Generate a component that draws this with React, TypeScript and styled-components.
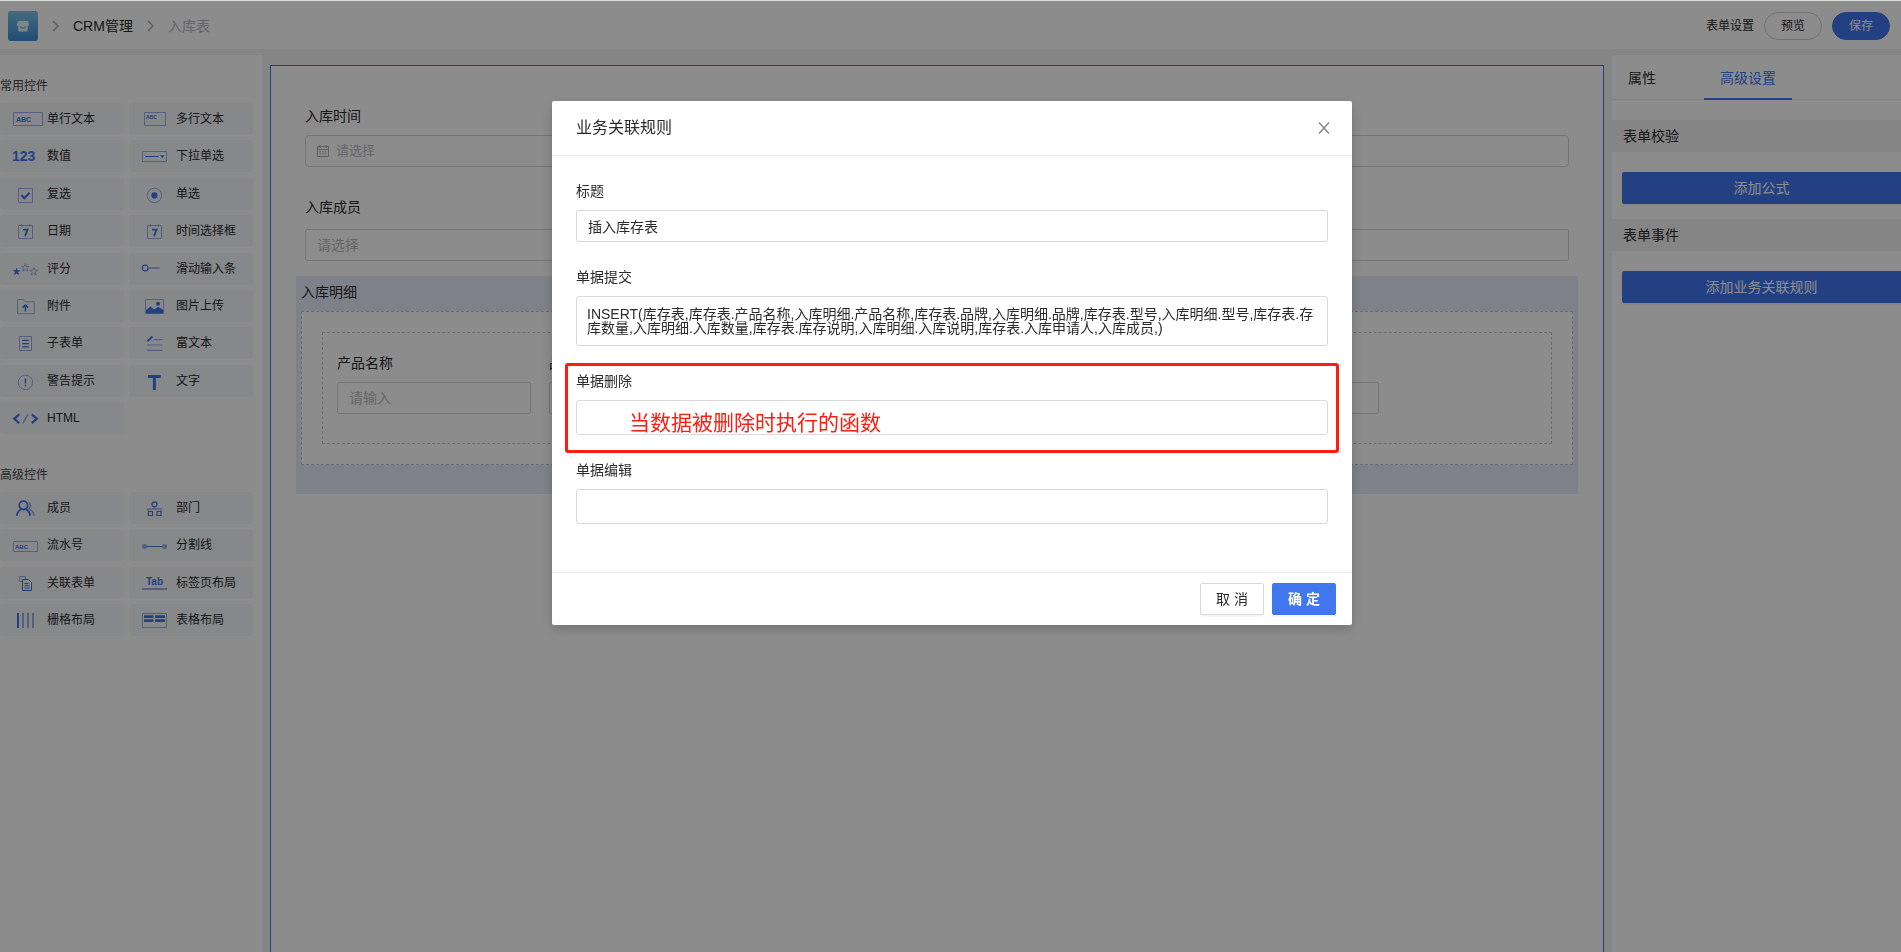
import React from "react";
import styled, { createGlobalStyle } from "styled-components";

const BLUE = "#4076ee";
const SOFT = "#96aeec";
const INK = "#2a2a2a";

const GlobalStyle = createGlobalStyle`
  * { box-sizing: border-box; }
  body {
    margin: 0;
    background: #f2f2f2;
    color: ${INK};
    font-family: "Liberation Sans", "Noto Sans CJK SC", sans-serif;
    font-size: 14px;
    line-height: 22px;
  }
  button, input, textarea { font: inherit; color: inherit; }
  button { cursor: pointer; }
`;

const Page = styled.div`
  display: flex;
  flex-direction: column;
  min-height: 100vh;
`;

const Header = styled.header`
  display: flex;
  align-items: center;
  justify-content: space-between;
  height: 49px;
  padding: 2px 11px 0 8px;
  border-top: 1px solid #d9dcdc;
  background: #fff;
`;

const Breadcrumb = styled.nav`
  display: flex;
  align-items: center;
  gap: 14px;
`;

const Logo = styled.a`
  display: block;
  width: 30px;
  height: 30px;
  border-radius: 3px;
  background: linear-gradient(#7ac6e2, #3c8bd6);
`;

const Crumb = styled.a<{ $muted?: boolean }>`
  color: ${(p) => (p.$muted ? "#b4b9c3" : INK)};
  text-decoration: none;
`;

const HeaderActions = styled.div`
  display: flex;
  align-items: center;
  gap: 10px;
  font-size: 12px;
`;

const TextLink = styled.a`
  color: ${INK};
  text-decoration: none;
`;

const PillButton = styled.button<{ $primary?: boolean }>`
  width: 58px;
  height: 28px;
  padding: 0;
  border: 1px solid ${(p) => (p.$primary ? BLUE : "#d0d0d0")};
  border-radius: 14px;
  background: ${(p) => (p.$primary ? BLUE : "#fff")};
  color: ${(p) => (p.$primary ? "#fff" : INK)};
`;

const Workspace = styled.div`
  display: flex;
  flex: 1;
  gap: 8px;
  margin-top: 6px;
`;

const Palette = styled.aside`
  width: 262px;
  flex: none;
  padding-top: 20px;
  background: #fff;
  font-size: 12px;
`;

const PaletteTitle = styled.h2`
  margin: 0 0 6px;
  font-size: 12px;
  font-weight: 400;
  color: #444;
`;

const TileGrid = styled.div<{ $height: number }>`
  display: grid;
  grid-template-columns: 124px 124px;
  grid-auto-rows: 32px;
  column-gap: 5px;
  align-content: space-between;
  height: ${(p) => p.$height}px;
  margin-bottom: 30px;
`;

const Tile = styled.button`
  display: flex;
  align-items: center;
  gap: 9px;
  padding: 0 0 0 13px;
  border: 0;
  border-radius: 4px;
  background: #f5f7fa;
  white-space: nowrap;
`;

const TileIcon = styled.svg`
  width: 25px;
  height: 32px;
  flex: none;
  overflow: visible;
  font-family: "Liberation Sans", sans-serif;
  font-weight: 700;
`;

const Canvas = styled.main`
  flex: 1;
  min-width: 0;
  margin-top: 10px;
  padding: 39px 25px 0;
  border: 1px solid ${BLUE};
  border-bottom: 0;
  background: #fff;
`;

const CanvasField = styled.div<{ $after: number }>`
  padding: 0 9px;
  margin-bottom: ${(p) => p.$after}px;
`;

const Label = styled.label<{ $gap?: number }>`
  display: block;
  margin-bottom: ${(p) => p.$gap ?? 8}px;
`;

const InputBox = styled.div<{ $radius?: number; $small?: boolean }>`
  display: flex;
  align-items: center;
  gap: 7px;
  height: 32px;
  padding: 0 11px;
  border: 1px solid #d5d5d9;
  border-radius: ${(p) => p.$radius ?? 2}px;
  background: #fff;
  font-size: ${(p) => (p.$small ? 13 : 14)}px;
`;

const BareInput = styled.input`
  flex: 1;
  min-width: 0;
  padding: 0;
  border: 0;
  outline: 0;
  background: transparent;
  &::placeholder {
    color: #b9b9bd;
    opacity: 1;
  }
`;

const SubForm = styled.section`
  padding: 5px 5px 29px;
  background: #e5ecf9;
`;

const SubFormTitle = styled.h3`
  margin: 0 0 8px;
  font-size: 14px;
  font-weight: 400;
`;

const DashedOuter = styled.div`
  padding: 20px;
  border: 1px dashed #c4c4c4;
  background: #fff;
`;

const DashedInner = styled.div`
  display: flex;
  gap: 18px;
  padding: 19px 14px 29px;
  border: 1px dashed #c4c4c4;
`;

const SubColumn = styled.div`
  width: 194px;
`;

const Inspector = styled.aside`
  width: 289px;
  flex: none;
  background: #fff;
`;

const Tabs = styled.div`
  display: flex;
  height: 45px;
  gap: 32px;
  border-bottom: 1px solid #e8e8e8;
`;

const Tab = styled.button<{ $active?: boolean }>`
  height: 45px;
  padding: 2px 16px 0;
  border: 0;
  border-bottom: 2px solid ${(p) => (p.$active ? BLUE : "transparent")};
  background: none;
  color: ${(p) => (p.$active ? BLUE : INK)};
`;

const InspectorGroup = styled.section`
  &:first-of-type {
    margin-top: 20px;
  }
  margin-bottom: 15px;
`;

const InspectorTitle = styled.h3`
  margin: 0;
  padding: 5px 11px;
  font-size: 14px;
  font-weight: 400;
  background: #f2f2f5;
`;

const WideButton = styled.button`
  display: block;
  width: calc(100% - 10px);
  height: 32px;
  margin: 20px 0 0 10px;
  padding: 0;
  border: 0;
  border-radius: 2px 0 0 2px;
  background: ${BLUE};
  box-shadow: 0 2px 0 rgba(0, 0, 0, 0.05);
  color: #fff;
`;

const Mask = styled.div`
  position: fixed;
  inset: 1px 0 0 0;
  display: flex;
  align-items: flex-start;
  justify-content: center;
  padding: 100px 0 0 3px;
  background: rgba(0, 0, 0, 0.45);
`;

const Dialog = styled.div`
  width: 800px;
  border-radius: 2px;
  background: #fff;
  box-shadow: 0 4px 12px rgba(0, 0, 0, 0.2);
`;

const DialogHead = styled.div`
  display: flex;
  align-items: center;
  justify-content: space-between;
  height: 55px;
  padding: 0 20px 0 24px;
  border-bottom: 1px solid #ebebeb;
`;

const DialogTitle = styled.h1`
  margin: 0;
  font-size: 16px;
  font-weight: 400;
`;

const CloseButton = styled.button`
  display: grid;
  place-items: center;
  width: 16px;
  height: 16px;
  padding: 0;
  border: 0;
  background: none;
`;

const DialogBody = styled.div`
  display: flex;
  flex-direction: column;
  gap: 24px;
  padding: 24px 24px 48px;
`;

const DialogField = styled.div`
  position: relative;
`;

const DialogInput = styled.input`
  display: block;
  width: 100%;
  height: 32px;
  padding: 0 11px;
  border: 1px solid #d9d9d9;
  border-radius: 2px;
  outline: 0;
`;

const CodeArea = styled.textarea<{ $height: number }>`
  display: block;
  width: 100%;
  height: ${(p) => p.$height}px;
  padding: 10px;
  border: 1px solid #d9d9d9;
  border-radius: 3px;
  outline: 0;
  overflow: hidden;
  resize: none;
  line-height: 14px;
`;

const Highlight = styled.div`
  position: absolute;
  inset: -7px -11px -18px;
  border: 3px solid #ff1c10;
  border-radius: 3px;
  pointer-events: none;
`;

const Note = styled.p`
  position: absolute;
  top: 37px;
  left: 53px;
  margin: 0;
  color: #ff1c10;
  font-size: 21px;
  line-height: 32px;
`;

const DialogFoot = styled.div`
  display: flex;
  justify-content: flex-end;
  gap: 8px;
  padding: 10px 16px;
  border-top: 1px solid #ebebeb;
`;

const DialogButton = styled.button<{ $primary?: boolean }>`
  width: 64px;
  height: 32px;
  padding: 0;
  border: 1px solid ${(p) => (p.$primary ? BLUE : "#d9d9d9")};
  border-radius: 2px;
  background: ${(p) => (p.$primary ? BLUE : "#fff")};
  box-shadow: 0 2px 0 rgba(0, 0, 0, 0.03);
  color: ${(p) => (p.$primary ? "#fff" : INK)};
  font-weight: ${(p) => (p.$primary ? 600 : 400)};
`;

const star = (cx: number, cy: number) =>
  Array.from({ length: 10 }, (_, i) => {
    const r = i % 2 ? 1.8 : 4.2;
    const a = -Math.PI / 2 + (i * Math.PI) / 5;
    return `${(cx + r * Math.cos(a)).toFixed(2)},${(cy + r * Math.sin(a)).toFixed(2)}`;
  }).join(" ");

const icons: Record<string, React.ReactNode> = {
  single: (
    <>
      <path d="M.5 9.5h29v13H.5z" stroke={SOFT} fill="none" />
      <text x="3" y="19" fontSize="7" fill={BLUE}>ABC</text>
    </>
  ),
  multi: (
    <>
      <path d="M2.5 9.5h21v13h-21z" stroke={SOFT} fill="none" />
      <text x="4" y="16" fontSize="5" fill={BLUE}>ABC</text>
    </>
  ),
  number: <text x="-1" y="21" fontSize="14" fill={BLUE}>123</text>,
  select: (
    <>
      <path d="M.5 11.5h24v10H.5z" stroke={SOFT} fill="none" />
      <path d="M3 16.5h13.5" stroke={BLUE} />
      <path d="M18 15.2h4.6l-2.3 2.8z" fill={BLUE} />
    </>
  ),
  checkbox: (
    <>
      <path d="M5.5 10.5h14v14h-14z" stroke={SOFT} fill="none" />
      <path d="M8.3 17l3 3.2 5.2-5.4" stroke={BLUE} strokeWidth="2" fill="none" />
    </>
  ),
  radio: (
    <>
      <circle cx="12.4" cy="17.4" r="7.2" stroke={SOFT} fill="none" />
      <circle cx="12.4" cy="17.4" r="3.1" fill={BLUE} />
    </>
  ),
  calendar: (
    <>
      <path d="M5.5 10.5h14v13h-14z" stroke={SOFT} fill="none" />
      <path d="M8.5 9v3M16.5 9v3" stroke={SOFT} />
      <path d="M10 14.7h4.6l-2.6 6.5" stroke={BLUE} strokeWidth="1.8" fill="none" />
    </>
  ),
  rate: (
    <>
      <polygon points={star(3.6, 18.6)} fill={BLUE} />
      <polygon points={star(12.2, 14.8)} fill="none" stroke={SOFT} strokeWidth=".9" />
      <polygon points={star(20.8, 18.6)} fill="none" stroke={SOFT} strokeWidth=".9" />
    </>
  ),
  slider: (
    <>
      <path d="M6.5 15h11.2" stroke={SOFT} strokeWidth="1.6" />
      <circle cx="3.2" cy="15" r="2.9" stroke={BLUE} strokeWidth="1.2" fill="none" />
    </>
  ),
  upload: (
    <>
      <path d="M4.5 9.5h6l1.6 2.2h9.2v12H4.5z" stroke={SOFT} fill="none" />
      <path d="M12.4 21.5v-6M9.6 17.6l2.8-2.6 2.8 2.6" stroke={BLUE} strokeWidth="1.5" fill="none" />
    </>
  ),
  image: (
    <>
      <path d="M3.5 9.5h18v14h-18z" stroke={SOFT} fill="none" />
      <path d="M4 20l4.5-3.6 3.6 3.2 4.2-2.8 5 3.2v3.4H4z" fill={BLUE} />
      <circle cx="16" cy="13.8" r="2" fill={BLUE} />
    </>
  ),
  subform: (
    <>
      <path d="M6.5 9.5h12v14h-12z" stroke={SOFT} fill="none" />
      <path d="M9.2 13.4h6.6M9.2 16.6h6.6M9.2 19.9h6.6" stroke={BLUE} strokeWidth="1.3" />
    </>
  ),
  rich: (
    <>
      <path d="M11.5 12.7h8.8M5 18h15.3M5 23.4h15.3" stroke={SOFT} strokeWidth="1.2" />
      <path d="M5.4 14.4l5-5" stroke={BLUE} strokeWidth="2" />
    </>
  ),
  alert: (
    <>
      <circle cx="12.4" cy="17.4" r="7.2" stroke={SOFT} fill="none" />
      <path d="M12.4 13.6v5M12.4 19.8v1.4" stroke={BLUE} strokeWidth="1.4" />
    </>
  ),
  text: <path d="M6 11.4h12.8M12.4 11.4V25" stroke={BLUE} strokeWidth="3" />,
  html: (
    <>
      <path d="M15 12.2L9.8 21.4" stroke={SOFT} strokeWidth="1.6" />
      <path d="M6.2 12.4l-5 4.4 5 4.4M18.8 12.4l5 4.4-5 4.4" stroke={BLUE} strokeWidth="2.2" fill="none" />
    </>
  ),
  member: (
    <>
      <path d="M15.6 10.2c2 1.2 2.6 4.6.4 6.8 2.6 1 4.6 3.6 5 6.8" stroke={SOFT} strokeWidth="1.5" fill="none" />
      <circle cx="10.4" cy="13.3" r="4.2" stroke={BLUE} strokeWidth="1.8" fill="none" />
      <path d="M3.8 23.8c.4-3.4 2.2-5.6 4.4-6.6M12.6 17.2c2.4 1 4.2 3.2 4.6 6.6" stroke={BLUE} strokeWidth="1.8" fill="none" />
    </>
  ),
  dept: (
    <>
      <path d="M6 19v-2h13v2M12.5 15v2" stroke={SOFT} strokeWidth="1.4" fill="none" />
      <circle cx="12.5" cy="12.3" r="2.5" stroke={BLUE} strokeWidth="1.3" fill="none" />
      <path d="M6.5 19.5h4v4h-4zM15 19.5h4v4h-4z" stroke={BLUE} strokeWidth="1.2" fill="none" />
    </>
  ),
  serial: (
    <>
      <path d="M.5 12.5h24v10H.5z" stroke={SOFT} fill="none" />
      <text x="2" y="20" fontSize="6" fill={BLUE}>ABC</text>
    </>
  ),
  divider: (
    <>
      <path d="M3 17.5h19" stroke={BLUE} />
      <circle cx="2.5" cy="17.5" r="2.5" fill={SOFT} />
      <circle cx="22.5" cy="17.5" r="2.5" fill={SOFT} />
    </>
  ),
  linked: (
    <>
      <path d="M9 14.5H6.5v-5h6V12" stroke={SOFT} fill="none" />
      <path d="M9.5 12.5h6l3 3v8h-9z" stroke={BLUE} fill="none" />
      <path d="M11.5 16.5h4M11.5 18.7h5M11.5 21h5" stroke={BLUE} />
    </>
  ),
  tab: (
    <>
      <text x="4" y="18" fontSize="10" fill={BLUE}>Tab</text>
      <path d="M0 22h25" stroke={SOFT} strokeWidth="2" />
    </>
  ),
  columns: (
    <>
      <path d="M5 9v15" stroke={BLUE} strokeWidth="2" />
      <path d="M10 9v15M15 9v15M20 9v15" stroke={SOFT} strokeWidth="2" />
    </>
  ),
  table: (
    <>
      <path d="M.5 9.5h24v14H.5z" stroke={SOFT} fill="none" />
      <path d="M2 12.7h9.500M13 12.7h10M2 16.7h9.500M13 16.7h10" stroke={BLUE} strokeWidth="2.8" />
    </>
  ),
};

type Widget = [icon: string, name: string];

const commonWidgets: Widget[] = [
  ["single", "单行文本"],
  ["multi", "多行文本"],
  ["number", "数值"],
  ["select", "下拉单选"],
  ["checkbox", "复选"],
  ["radio", "单选"],
  ["calendar", "日期"],
  ["calendar", "时间选择框"],
  ["rate", "评分"],
  ["slider", "滑动输入条"],
  ["upload", "附件"],
  ["image", "图片上传"],
  ["subform", "子表单"],
  ["rich", "富文本"],
  ["alert", "警告提示"],
  ["text", "文字"],
  ["html", "HTML"],
];

const advancedWidgets: Widget[] = [
  ["member", "成员"],
  ["dept", "部门"],
  ["serial", "流水号"],
  ["divider", "分割线"],
  ["linked", "关联表单"],
  ["tab", "标签页布局"],
  ["columns", "栅格布局"],
  ["table", "表格布局"],
];

const subColumns = ["产品名称", "品牌", "型号", "入库数量", "入库说明"];

const insertRule =
  "INSERT(库存表,库存表.产品名称,入库明细.产品名称,库存表.品牌,入库明细.品牌,库存表.型号,入库明细.型号,库存表.存库数量,入库明细.入库数量,库存表.库存说明,入库明细.入库说明,库存表.入库申请人,入库成员,)";

function WidgetGroup({ title, widgets, height }: { title: string; widgets: Widget[]; height: number }) {
  return (
    <section>
      <PaletteTitle>{title}</PaletteTitle>
      <TileGrid $height={height}>
        {widgets.map(([icon, name]) => (
          <Tile key={name} type="button">
            <TileIcon viewBox="0 0 25 32" aria-hidden="true">{icons[icon]}</TileIcon>
            {name}
          </Tile>
        ))}
      </TileGrid>
    </section>
  );
}

function Chevron() {
  return (
    <svg width="7" height="12" viewBox="0 0 7 12" fill="none" stroke="#a9adb5" strokeWidth="1.5" aria-hidden="true">
      <path d="M1 1l5 5-5 5" />
    </svg>
  );
}

export default function App() {
  return (
    <Page>
      <GlobalStyle />
      <Header>
        <Breadcrumb>
          <Logo href="#" aria-label="首页">
            <svg width="30" height="30" viewBox="0 0 30 30" aria-hidden="true">
              <path d="M10 10h10l1 3.6c0 1-.6 1.5-1.3 1.7v4.2a1 1 0 0 1-1 1h-7.400a1 1 0 0 1-1-1v-4.2C9.600 15.1 9 14.6 9 13.6z" fill="#e9f3fa" />
              <path d="M12.500 15.500c.4 2.300 4.600 2.300 5 0" fill="none" stroke="#5fa9d8" strokeWidth="1.2" />
            </svg>
          </Logo>
          <Chevron />
          <Crumb href="#">CRM管理</Crumb>
          <Chevron />
          <Crumb href="#" $muted>入库表</Crumb>
        </Breadcrumb>
        <HeaderActions>
          <TextLink href="#">表单设置</TextLink>
          <PillButton type="button">预览</PillButton>
          <PillButton type="button" $primary>保存</PillButton>
        </HeaderActions>
      </Header>

      <Workspace>
        <Palette>
          <WidgetGroup title="常用控件" widgets={commonWidgets} height={331} />
          <WidgetGroup title="高级控件" widgets={advancedWidgets} height={144} />
        </Palette>

        <Canvas>
          <CanvasField $after={29}>
            <Label htmlFor="in-time">入库时间</Label>
            <InputBox $radius={4} $small>
              <svg width="12" height="12" viewBox="0 0 12 12" fill="none" stroke="#a9a9ad" aria-hidden="true">
                <path d="M.5 1.5h11v10H.5zM.5 4.5h11M3 0v3M9 0v3" />
                <path d="M2.5 6.8h7M2.5 9h7" strokeDasharray="1.600 1" />
              </svg>
              <BareInput id="in-time" placeholder="请选择" />
            </InputBox>
          </CanvasField>
          <CanvasField $after={15}>
            <Label htmlFor="in-member" $gap={11}>入库成员</Label>
            <InputBox>
              <BareInput id="in-member" placeholder="请选择" />
            </InputBox>
          </CanvasField>
          <SubForm>
            <SubFormTitle>入库明细</SubFormTitle>
            <DashedOuter>
              <DashedInner>
                {subColumns.map((name, i) => (
                  <SubColumn key={name}>
                    <Label htmlFor={`sub-${i}`}>{name}</Label>
                    <InputBox>
                      <BareInput id={`sub-${i}`} placeholder="请输入" />
                    </InputBox>
                  </SubColumn>
                ))}
              </DashedInner>
            </DashedOuter>
          </SubForm>
        </Canvas>

        <Inspector>
          <Tabs role="tablist">
            <Tab type="button" role="tab" aria-selected={false}>属性</Tab>
            <Tab type="button" role="tab" aria-selected $active>高级设置</Tab>
          </Tabs>
          <InspectorGroup>
            <InspectorTitle>表单校验</InspectorTitle>
            <WideButton type="button">添加公式</WideButton>
          </InspectorGroup>
          <InspectorGroup>
            <InspectorTitle>表单事件</InspectorTitle>
            <WideButton type="button">添加业务关联规则</WideButton>
          </InspectorGroup>
        </Inspector>
      </Workspace>

      <Mask>
        <Dialog role="dialog" aria-modal="true" aria-labelledby="rule-title">
          <DialogHead>
            <DialogTitle id="rule-title">业务关联规则</DialogTitle>
            <CloseButton type="button" aria-label="关闭">
              <svg width="12" height="12" viewBox="0 0 12 12" stroke="#888" strokeWidth="1.5" aria-hidden="true">
                <path d="M1 .5l10 11M11 .5l-10 11" />
              </svg>
            </CloseButton>
          </DialogHead>
          <DialogBody>
            <DialogField>
              <Label htmlFor="rule-name">标题</Label>
              <DialogInput id="rule-name" defaultValue="插入库存表" />
            </DialogField>
            <DialogField>
              <Label htmlFor="rule-submit">单据提交</Label>
              <CodeArea id="rule-submit" $height={50} spellCheck={false} defaultValue={insertRule} />
            </DialogField>
            <DialogField>
              <Label htmlFor="rule-delete">单据删除</Label>
              <CodeArea id="rule-delete" $height={35} />
              <Highlight />
              <Note>当数据被删除时执行的函数</Note>
            </DialogField>
            <DialogField>
              <Label htmlFor="rule-edit">单据编辑</Label>
              <CodeArea id="rule-edit" $height={35} />
            </DialogField>
          </DialogBody>
          <DialogFoot>
            <DialogButton type="button">取 消</DialogButton>
            <DialogButton type="button" $primary>确 定</DialogButton>
          </DialogFoot>
        </Dialog>
      </Mask>
    </Page>
  );
}
